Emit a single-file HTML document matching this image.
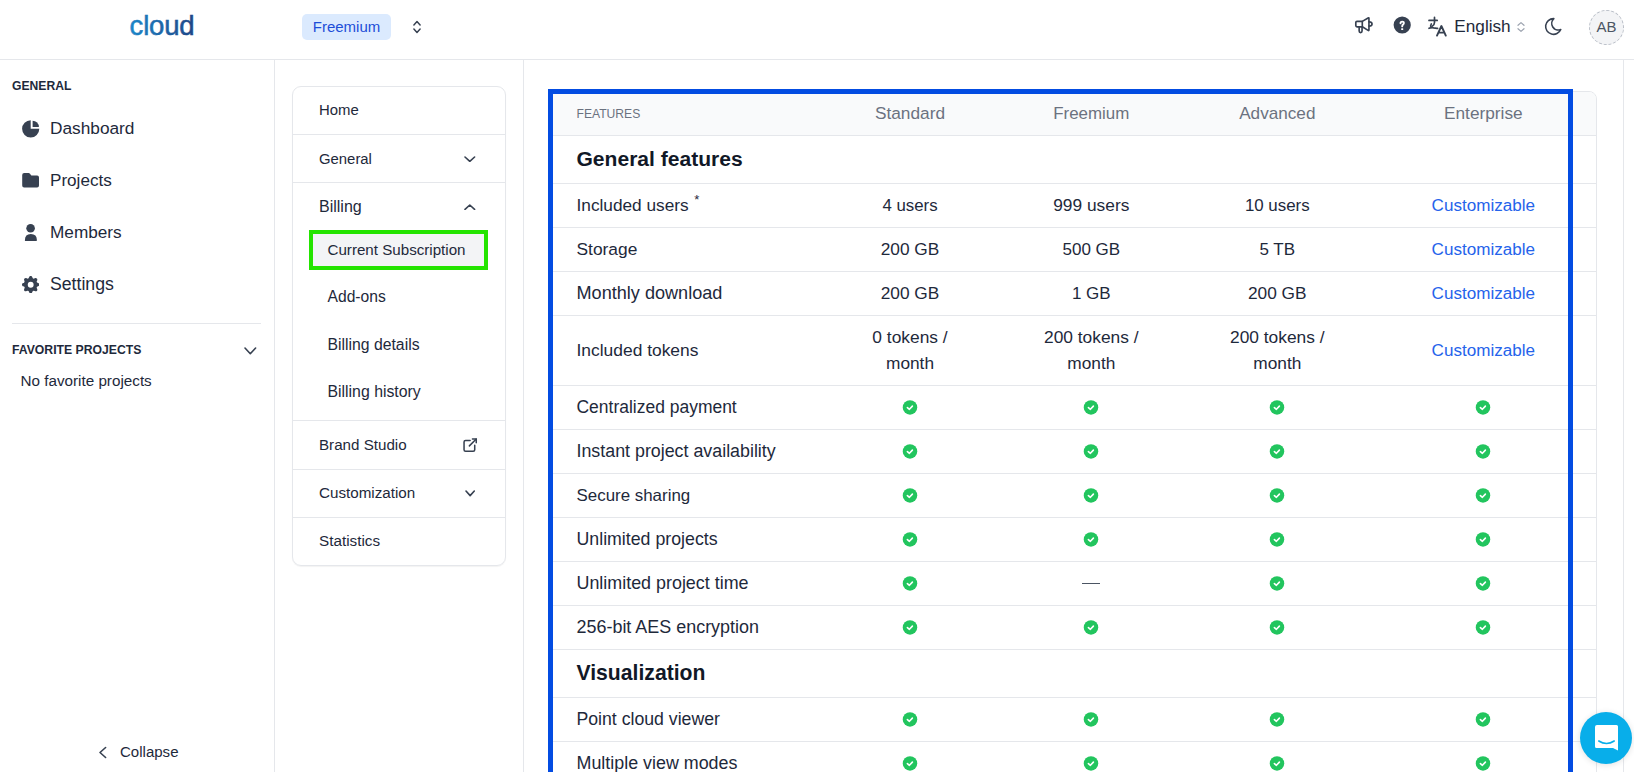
<!DOCTYPE html>
<html><head><meta charset="utf-8">
<style>
*{box-sizing:border-box;margin:0;padding:0}
html,body{width:1634px;height:772px;overflow:hidden;background:#fff;font-family:"Liberation Sans",sans-serif;color:#1e293b;position:relative}
.a{position:absolute;white-space:nowrap}
svg{display:block}
</style></head><body>
<div style="position:absolute;left:0;top:59px;width:1634px;height:1px;background:#e5e7eb"></div>
<svg style="position:absolute;left:0;top:0" width="260" height="50" viewBox="0 0 260 50"><defs><linearGradient id="lg" x1="130" y1="0" x2="193" y2="0" gradientUnits="userSpaceOnUse"><stop offset="0" stop-color="#1b86c8"/><stop offset="1" stop-color="#1f4788"/></linearGradient></defs><text x="129.6" y="35" font-family="Liberation Sans" font-size="27.5" letter-spacing="-0.2" fill="url(#lg)" stroke="url(#lg)" stroke-width="0.55">cloud</text></svg>
<div style="position:absolute;left:302px;top:14px;width:89px;height:26px;border-radius:5px;background:#dbeafe"></div>
<div class="a" style="left:46.5px;width:600px;text-align:center;top:17.80px;font-size:15px;line-height:18px;color:#1d4ed8;">Freemium</div>
<svg style="position:absolute;left:411px;top:19px" width="12" height="16" viewBox="0 0 12 16"><path d="M2.9 5.9L6 2.6L9.1 5.9M2.9 10.1L6 13.4L9.1 10.1" fill="none" stroke="#374151" stroke-width="1.5" stroke-linecap="round" stroke-linejoin="round"/></svg>
<svg style="position:absolute;left:1350px;top:12px" width="30" height="26" viewBox="0 0 30 26"><g fill="none" stroke="#374151" stroke-width="1.65" stroke-linecap="round" stroke-linejoin="round"><path d="M12.3 9.4H7Q5.8 9.4 5.8 10.6V13.6Q5.8 14.8 7 14.8H12.3Z"/><path d="M12.3 9.4L18.1 6Q18.95 5.5 18.95 6.4V18Q18.95 18.9 18.1 18.4L12.3 14.8"/><path d="M18.95 9.8A3.1 2.15 0 0 1 18.95 14.1"/><path d="M9.15 14.8V19.1A1.45 1.45 0 0 0 12.05 19.1V14.8"/></g></svg>
<svg style="position:absolute;left:1390px;top:13px" width="24" height="24" viewBox="0 0 24 24"><circle cx="12.2" cy="12" r="8.6" fill="#374151"/><path d="M10.5 10.2Q10.5 8.6 12.2 8.6Q13.9 8.6 13.9 10.1Q13.9 11.1 13 11.6Q12.2 12.1 12.2 13.4" fill="none" stroke="#fff" stroke-width="1.9" stroke-linecap="round"/><rect x="11.2" y="15.2" width="2" height="1.8" rx="0.3" fill="#fff"/></svg>
<svg style="position:absolute;left:1424px;top:12px" width="28" height="28" viewBox="0 0 28 28"><g fill="none" stroke="#374151" stroke-width="1.7" stroke-linecap="round" stroke-linejoin="round"><path d="M5 8.4H13.2"/><path d="M10.5 5.4V10.5Q10.4 13.3 8.2 14.2"/><path d="M7.3 11.9Q6.2 13.6 7.2 15.4"/><path d="M5 16.3Q7.5 15.3 9.6 15.9Q11.6 16.4 13.6 16.3"/><path d="M13 23.6L17.4 14L21.8 23.6M14.6 20.6H20.2" stroke-width="1.9"/></g></svg>
<div class="a" style="left:1454.3px;top:16.24px;font-size:17.2px;line-height:21px;color:#1e293b;">English</div>
<svg style="position:absolute;left:1515px;top:20px" width="12" height="14" viewBox="0 0 12 14"><path d="M3 5.3L6 2.6L9 5.3M3 8.7L6 11.4L9 8.7" fill="none" stroke="#9ca3af" stroke-width="1.2" stroke-linecap="round" stroke-linejoin="round"/></svg>
<svg style="position:absolute;left:1542.6px;top:16.2px" width="21" height="21" viewBox="0 0 24 24"><path d="M12 3c.132 0 .263 0 .393 0a7.5 7.5 0 0 0 7.92 12.446a9 9 0 1 1 -8.313 -12.454z" fill="none" stroke="#374151" stroke-width="1.8" stroke-linecap="round" stroke-linejoin="round"/></svg>
<div style="position:absolute;left:1589px;top:10px;width:35px;height:35px;border-radius:50%;background:#f3f4f6;border:1px dashed #b9bec7"></div>
<div class="a" style="left:1306.5px;width:600px;text-align:center;top:17.91px;font-size:14.98px;line-height:18px;color:#4b5563;">AB</div>
<div style="position:absolute;left:274px;top:60px;width:1px;height:712px;background:#e5e7eb"></div>
<div class="a" style="left:12px;top:78.79px;font-size:12.15px;line-height:15px;color:#1e293b;font-weight:bold;">GENERAL</div>
<svg style="position:absolute;left:18px;top:115px" width="26" height="26" viewBox="0 0 26 26"><path d="M12.7 5.2V13.8H21.3A8.6 8.6 0 1 1 12.7 5.2Z" fill="#374151"/><path d="M14.6 5.7V12H20.9A6.3 6.3 0 0 0 14.6 5.7Z" fill="#374151"/></svg>
<div class="a" style="left:50px;top:118.01px;font-size:17.28px;line-height:21px;color:#1e293b;">Dashboard</div>
<svg style="position:absolute;left:18px;top:168px" width="26" height="26" viewBox="0 0 26 26"><path d="M6.2 5H10.6Q11.4 5 12 5.7L13.1 7.2Q13.4 7.6 14 7.6H19.1Q21 7.6 21 9.5V17.6Q21 19.5 19.1 19.5H6.1Q4.2 19.5 4.2 17.6V7Q4.2 5 6.2 5Z" fill="#374151"/></svg>
<div class="a" style="left:50px;top:169.76px;font-size:17.12px;line-height:21px;color:#1e293b;">Projects</div>
<svg style="position:absolute;left:18px;top:219px" width="26" height="26" viewBox="0 0 26 26"><circle cx="12.6" cy="9.3" r="4.3" fill="#374151"/><path d="M7.2 21.9Q6.9 21.9 6.9 21.3Q6.9 15 12.8 15Q18.9 15 18.9 21.3Q18.9 21.9 18.4 21.9Z" fill="#374151"/></svg>
<div class="a" style="left:50px;top:222.00px;font-size:17.22px;line-height:21px;color:#1e293b;">Members</div>
<svg style="position:absolute;left:22px;top:275.5px" width="17.4" height="17.4" viewBox="2 2 16 16"><path fill-rule="evenodd" d="M11.49 3.17c-.38-1.56-2.6-1.56-2.98 0a1.532 1.532 0 01-2.286.948c-1.372-.836-2.942.734-2.106 2.106.54.886.061 2.042-.947 2.287-1.561.379-1.561 2.6 0 2.978a1.532 1.532 0 01.947 2.287c-.836 1.372.734 2.942 2.106 2.106a1.532 1.532 0 012.287.947c.379 1.561 2.6 1.561 2.978 0a1.533 1.533 0 012.287-.947c1.372.836 2.942-.734 2.106-2.106a1.533 1.533 0 01.947-2.287c1.561-.379 1.561-2.6 0-2.978a1.532 1.532 0 01-.947-2.287c.836-1.372-.734-2.942-2.106-2.106a1.532 1.532 0 01-2.287-.947zM10 12.7a2.7 2.7 0 100-5.4 2.7 2.7 0 000 5.4z" fill="#374151"/></svg>
<div class="a" style="left:50px;top:274.00px;font-size:17.68px;line-height:21px;color:#1e293b;">Settings</div>
<div style="position:absolute;left:12px;top:323px;width:249px;height:1px;background:#e5e7eb"></div>
<div class="a" style="left:12px;top:342.56px;font-size:12.23px;line-height:15px;color:#1e293b;font-weight:bold;">FAVORITE PROJECTS</div>
<svg style="position:absolute;left:243px;top:344px" width="15" height="14" viewBox="0 0 15 14"><path d="M2 4L7.3 9.7L12.6 4" fill="none" stroke="#374151" stroke-width="1.6" stroke-linecap="round" stroke-linejoin="round"/></svg>
<div class="a" style="left:20.5px;top:371.72px;font-size:15.24px;line-height:18px;color:#1e293b;">No favorite projects</div>
<svg style="position:absolute;left:96px;top:744px" width="14" height="17" viewBox="0 0 14 17"><path d="M9.6 3.5L4 8.5L9.6 13.5" fill="none" stroke="#374151" stroke-width="1.6" stroke-linecap="round" stroke-linejoin="round"/></svg>
<div class="a" style="left:120px;top:743.00px;font-size:15.04px;line-height:18px;color:#1e293b;">Collapse</div>
<div style="position:absolute;left:523px;top:60px;width:1px;height:712px;background:#e5e7eb"></div>
<div style="position:absolute;left:292px;top:86px;width:214px;height:480px;border:1px solid #e5e7eb;border-radius:9px;box-shadow:0 1px 1px rgba(0,0,0,0.05)"></div>
<div style="position:absolute;left:293px;top:134px;width:212px;height:1px;background:#e5e7eb"></div>
<div style="position:absolute;left:293px;top:182px;width:212px;height:1px;background:#e5e7eb"></div>
<div style="position:absolute;left:293px;top:420px;width:212px;height:1px;background:#e5e7eb"></div>
<div style="position:absolute;left:293px;top:469px;width:212px;height:1px;background:#e5e7eb"></div>
<div style="position:absolute;left:293px;top:517px;width:212px;height:1px;background:#e5e7eb"></div>
<div class="a" style="left:319px;top:101.33px;font-size:14.91px;line-height:18px;color:#1e293b;">Home</div>
<div class="a" style="left:319px;top:149.74px;font-size:14.89px;line-height:18px;color:#1e293b;">General</div>
<svg style="position:absolute;left:464.0px;top:155.5px" width="11.6" height="6.4" viewBox="0 0 11.6 6.4"><path d="M1 1L5.8 5.4L10.6 1" fill="none" stroke="#374151" stroke-width="1.6" stroke-linecap="round" stroke-linejoin="round"/></svg>
<div class="a" style="left:319px;top:196.95px;font-size:16.0px;line-height:19px;color:#1e293b;">Billing</div>
<svg style="position:absolute;left:464.0px;top:203.5px" width="11.6" height="6.4" viewBox="0 0 11.6 6.4"><path d="M1 5.4L5.8 1L10.6 5.4" fill="none" stroke="#374151" stroke-width="1.6" stroke-linecap="round" stroke-linejoin="round"/></svg>
<div style="position:absolute;left:309px;top:230px;width:179px;height:40px;background:#f3f4f6;border:4px solid #24e400"></div>
<div class="a" style="left:327.5px;top:241.25px;font-size:15.15px;line-height:18px;color:#1e293b;">Current Subscription</div>
<div class="a" style="left:327.5px;top:287.47px;font-size:15.65px;line-height:19px;color:#1e293b;">Add-ons</div>
<div class="a" style="left:327.5px;top:334.53px;font-size:15.77px;line-height:19px;color:#1e293b;">Billing details</div>
<div class="a" style="left:327.5px;top:382.41px;font-size:15.84px;line-height:19px;color:#1e293b;">Billing history</div>
<div class="a" style="left:319px;top:435.74px;font-size:15.16px;line-height:18px;color:#1e293b;">Brand Studio</div>
<svg style="position:absolute;left:460.6px;top:435.9px" width="18.3" height="18.3" viewBox="0 0 24 24"><g fill="none" stroke="#374151" stroke-width="2" stroke-linecap="round" stroke-linejoin="round"><path d="M12 6h-6a2 2 0 0 0 -2 2v10a2 2 0 0 0 2 2h10a2 2 0 0 0 2 -2v-6"/><path d="M11 13l9 -9"/><path d="M15 4h5v5"/></g></svg>
<div class="a" style="left:319px;top:483.73px;font-size:15.19px;line-height:18px;color:#1e293b;">Customization</div>
<svg style="position:absolute;left:464.7px;top:490.0px" width="10.3" height="6.6" viewBox="0 0 10.3 6.6"><path d="M1 1L5.15 5.6L9.3 1" fill="none" stroke="#374151" stroke-width="1.6" stroke-linecap="round" stroke-linejoin="round"/></svg>
<div class="a" style="left:319px;top:532.21px;font-size:15.25px;line-height:18px;color:#1e293b;">Statistics</div>
<div style="position:absolute;left:550px;top:91px;width:1047px;height:720px;border:1px solid #e5e7eb;border-radius:8px;overflow:hidden"><div style="position:absolute;left:0;top:0;width:100%;height:44px;background:#f9fafb"></div></div>
<div style="position:absolute;left:551px;top:135px;width:1045px;height:1px;background:#e5e7eb"></div>
<div style="position:absolute;left:551px;top:183px;width:1045px;height:1px;background:#e5e7eb"></div>
<div style="position:absolute;left:551px;top:227px;width:1045px;height:1px;background:#e5e7eb"></div>
<div style="position:absolute;left:551px;top:271px;width:1045px;height:1px;background:#e5e7eb"></div>
<div style="position:absolute;left:551px;top:315px;width:1045px;height:1px;background:#e5e7eb"></div>
<div style="position:absolute;left:551px;top:385px;width:1045px;height:1px;background:#e5e7eb"></div>
<div style="position:absolute;left:551px;top:429px;width:1045px;height:1px;background:#e5e7eb"></div>
<div style="position:absolute;left:551px;top:473px;width:1045px;height:1px;background:#e5e7eb"></div>
<div style="position:absolute;left:551px;top:517px;width:1045px;height:1px;background:#e5e7eb"></div>
<div style="position:absolute;left:551px;top:561px;width:1045px;height:1px;background:#e5e7eb"></div>
<div style="position:absolute;left:551px;top:605px;width:1045px;height:1px;background:#e5e7eb"></div>
<div style="position:absolute;left:551px;top:649px;width:1045px;height:1px;background:#e5e7eb"></div>
<div style="position:absolute;left:551px;top:697px;width:1045px;height:1px;background:#e5e7eb"></div>
<div style="position:absolute;left:551px;top:741px;width:1045px;height:1px;background:#e5e7eb"></div>
<div class="a" style="left:576.5px;top:106.89px;font-size:12.13px;line-height:15px;color:#6b7280;">FEATURES</div>
<div class="a" style="left:610px;width:600px;text-align:center;top:103.00px;font-size:17.27px;line-height:21px;color:#6b7280;">Standard</div>
<div class="a" style="left:791.3px;width:600px;text-align:center;top:104.00px;font-size:16.91px;line-height:20px;color:#6b7280;">Freemium</div>
<div class="a" style="left:977.3px;width:600px;text-align:center;top:103.00px;font-size:17.15px;line-height:21px;color:#6b7280;">Advanced</div>
<div class="a" style="left:1183.3px;width:600px;text-align:center;top:103.00px;font-size:17.26px;line-height:21px;color:#6b7280;">Enterprise</div>
<div class="a" style="left:576.5px;top:146.00px;font-size:21.06px;line-height:25px;color:#111827;font-weight:bold;">General features</div>
<div class="a" style="left:576.5px;top:195.00px;font-size:17.26px;line-height:21px;color:#1e293b;">Included users<span style="font-size:13px;position:relative;top:-7px;margin-left:5.5px">*</span></div>
<div class="a" style="left:610px;width:600px;text-align:center;top:196.00px;font-size:16.83px;line-height:20px;color:#1e293b;">4 users</div>
<div class="a" style="left:791.3px;width:600px;text-align:center;top:195.00px;font-size:17.33px;line-height:21px;color:#1e293b;">999 users</div>
<div class="a" style="left:977.3px;width:600px;text-align:center;top:196.00px;font-size:16.9px;line-height:20px;color:#1e293b;">10 users</div>
<div class="a" style="left:1183.3px;width:600px;text-align:center;top:196.00px;font-size:17.08px;line-height:20px;color:#2563eb;">Customizable</div>
<div class="a" style="left:576.5px;top:239.00px;font-size:17.38px;line-height:21px;color:#1e293b;">Storage</div>
<div class="a" style="left:610px;width:600px;text-align:center;top:239.00px;font-size:17.29px;line-height:21px;color:#1e293b;">200 GB</div>
<div class="a" style="left:791.3px;width:600px;text-align:center;top:240.00px;font-size:17px;line-height:20px;color:#1e293b;">500 GB</div>
<div class="a" style="left:977.3px;width:600px;text-align:center;top:240.00px;font-size:16.99px;line-height:20px;color:#1e293b;">5 TB</div>
<div class="a" style="left:1183.3px;width:600px;text-align:center;top:240.00px;font-size:17.08px;line-height:20px;color:#2563eb;">Customizable</div>
<div class="a" style="left:576.5px;top:282.00px;font-size:18.1px;line-height:22px;color:#1e293b;">Monthly download</div>
<div class="a" style="left:610px;width:600px;text-align:center;top:283.00px;font-size:17.29px;line-height:21px;color:#1e293b;">200 GB</div>
<div class="a" style="left:791.3px;width:600px;text-align:center;top:284.00px;font-size:17px;line-height:20px;color:#1e293b;">1 GB</div>
<div class="a" style="left:977.3px;width:600px;text-align:center;top:283.00px;font-size:17.29px;line-height:21px;color:#1e293b;">200 GB</div>
<div class="a" style="left:1183.3px;width:600px;text-align:center;top:284.00px;font-size:17.08px;line-height:20px;color:#2563eb;">Customizable</div>
<div class="a" style="left:576.5px;top:340.00px;font-size:17.42px;line-height:21px;color:#1e293b;">Included tokens</div>
<div class="a" style="left:610px;width:600px;text-align:center;top:327.48px;font-size:17.37px;line-height:21px;color:#1e293b;">0 tokens /</div>
<div class="a" style="left:610px;width:600px;text-align:center;top:353.00px;font-size:17.3px;line-height:21px;color:#1e293b;">month</div>
<div class="a" style="left:791.3px;width:600px;text-align:center;top:327.47px;font-size:17.38px;line-height:21px;color:#1e293b;">200 tokens /</div>
<div class="a" style="left:791.3px;width:600px;text-align:center;top:353.00px;font-size:17.3px;line-height:21px;color:#1e293b;">month</div>
<div class="a" style="left:977.3px;width:600px;text-align:center;top:327.47px;font-size:17.38px;line-height:21px;color:#1e293b;">200 tokens /</div>
<div class="a" style="left:977.3px;width:600px;text-align:center;top:353.00px;font-size:17.3px;line-height:21px;color:#1e293b;">month</div>
<div class="a" style="left:1183.3px;width:600px;text-align:center;top:341.00px;font-size:17.08px;line-height:20px;color:#2563eb;">Customizable</div>
<div class="a" style="left:576.5px;top:397.00px;font-size:17.48px;line-height:21px;color:#1e293b;">Centralized payment</div>
<svg style="position:absolute;left:902.1px;top:399.1px" width="16" height="16" viewBox="0 0 16 16"><circle cx="8" cy="8.4" r="7.25" fill="#22c55e"/><path d="M5.4 8.6L7.4 10.3L10.4 7.1" fill="none" stroke="#fff" stroke-width="1.6" stroke-linecap="round" stroke-linejoin="round"/></svg>
<svg style="position:absolute;left:1083.3999999999999px;top:399.1px" width="16" height="16" viewBox="0 0 16 16"><circle cx="8" cy="8.4" r="7.25" fill="#22c55e"/><path d="M5.4 8.6L7.4 10.3L10.4 7.1" fill="none" stroke="#fff" stroke-width="1.6" stroke-linecap="round" stroke-linejoin="round"/></svg>
<svg style="position:absolute;left:1269.3999999999999px;top:399.1px" width="16" height="16" viewBox="0 0 16 16"><circle cx="8" cy="8.4" r="7.25" fill="#22c55e"/><path d="M5.4 8.6L7.4 10.3L10.4 7.1" fill="none" stroke="#fff" stroke-width="1.6" stroke-linecap="round" stroke-linejoin="round"/></svg>
<svg style="position:absolute;left:1475.3999999999999px;top:399.1px" width="16" height="16" viewBox="0 0 16 16"><circle cx="8" cy="8.4" r="7.25" fill="#22c55e"/><path d="M5.4 8.6L7.4 10.3L10.4 7.1" fill="none" stroke="#fff" stroke-width="1.6" stroke-linecap="round" stroke-linejoin="round"/></svg>
<div class="a" style="left:576.5px;top:441.00px;font-size:17.84px;line-height:21px;color:#1e293b;">Instant project availability</div>
<svg style="position:absolute;left:902.1px;top:443.1px" width="16" height="16" viewBox="0 0 16 16"><circle cx="8" cy="8.4" r="7.25" fill="#22c55e"/><path d="M5.4 8.6L7.4 10.3L10.4 7.1" fill="none" stroke="#fff" stroke-width="1.6" stroke-linecap="round" stroke-linejoin="round"/></svg>
<svg style="position:absolute;left:1083.3999999999999px;top:443.1px" width="16" height="16" viewBox="0 0 16 16"><circle cx="8" cy="8.4" r="7.25" fill="#22c55e"/><path d="M5.4 8.6L7.4 10.3L10.4 7.1" fill="none" stroke="#fff" stroke-width="1.6" stroke-linecap="round" stroke-linejoin="round"/></svg>
<svg style="position:absolute;left:1269.3999999999999px;top:443.1px" width="16" height="16" viewBox="0 0 16 16"><circle cx="8" cy="8.4" r="7.25" fill="#22c55e"/><path d="M5.4 8.6L7.4 10.3L10.4 7.1" fill="none" stroke="#fff" stroke-width="1.6" stroke-linecap="round" stroke-linejoin="round"/></svg>
<svg style="position:absolute;left:1475.3999999999999px;top:443.1px" width="16" height="16" viewBox="0 0 16 16"><circle cx="8" cy="8.4" r="7.25" fill="#22c55e"/><path d="M5.4 8.6L7.4 10.3L10.4 7.1" fill="none" stroke="#fff" stroke-width="1.6" stroke-linecap="round" stroke-linejoin="round"/></svg>
<div class="a" style="left:576.5px;top:486.13px;font-size:16.92px;line-height:20px;color:#1e293b;">Secure sharing</div>
<svg style="position:absolute;left:902.1px;top:487.1px" width="16" height="16" viewBox="0 0 16 16"><circle cx="8" cy="8.4" r="7.25" fill="#22c55e"/><path d="M5.4 8.6L7.4 10.3L10.4 7.1" fill="none" stroke="#fff" stroke-width="1.6" stroke-linecap="round" stroke-linejoin="round"/></svg>
<svg style="position:absolute;left:1083.3999999999999px;top:487.1px" width="16" height="16" viewBox="0 0 16 16"><circle cx="8" cy="8.4" r="7.25" fill="#22c55e"/><path d="M5.4 8.6L7.4 10.3L10.4 7.1" fill="none" stroke="#fff" stroke-width="1.6" stroke-linecap="round" stroke-linejoin="round"/></svg>
<svg style="position:absolute;left:1269.3999999999999px;top:487.1px" width="16" height="16" viewBox="0 0 16 16"><circle cx="8" cy="8.4" r="7.25" fill="#22c55e"/><path d="M5.4 8.6L7.4 10.3L10.4 7.1" fill="none" stroke="#fff" stroke-width="1.6" stroke-linecap="round" stroke-linejoin="round"/></svg>
<svg style="position:absolute;left:1475.3999999999999px;top:487.1px" width="16" height="16" viewBox="0 0 16 16"><circle cx="8" cy="8.4" r="7.25" fill="#22c55e"/><path d="M5.4 8.6L7.4 10.3L10.4 7.1" fill="none" stroke="#fff" stroke-width="1.6" stroke-linecap="round" stroke-linejoin="round"/></svg>
<div class="a" style="left:576.5px;top:529.00px;font-size:17.75px;line-height:21px;color:#1e293b;">Unlimited projects</div>
<svg style="position:absolute;left:902.1px;top:531.1px" width="16" height="16" viewBox="0 0 16 16"><circle cx="8" cy="8.4" r="7.25" fill="#22c55e"/><path d="M5.4 8.6L7.4 10.3L10.4 7.1" fill="none" stroke="#fff" stroke-width="1.6" stroke-linecap="round" stroke-linejoin="round"/></svg>
<svg style="position:absolute;left:1083.3999999999999px;top:531.1px" width="16" height="16" viewBox="0 0 16 16"><circle cx="8" cy="8.4" r="7.25" fill="#22c55e"/><path d="M5.4 8.6L7.4 10.3L10.4 7.1" fill="none" stroke="#fff" stroke-width="1.6" stroke-linecap="round" stroke-linejoin="round"/></svg>
<svg style="position:absolute;left:1269.3999999999999px;top:531.1px" width="16" height="16" viewBox="0 0 16 16"><circle cx="8" cy="8.4" r="7.25" fill="#22c55e"/><path d="M5.4 8.6L7.4 10.3L10.4 7.1" fill="none" stroke="#fff" stroke-width="1.6" stroke-linecap="round" stroke-linejoin="round"/></svg>
<svg style="position:absolute;left:1475.3999999999999px;top:531.1px" width="16" height="16" viewBox="0 0 16 16"><circle cx="8" cy="8.4" r="7.25" fill="#22c55e"/><path d="M5.4 8.6L7.4 10.3L10.4 7.1" fill="none" stroke="#fff" stroke-width="1.6" stroke-linecap="round" stroke-linejoin="round"/></svg>
<div class="a" style="left:576.5px;top:573.00px;font-size:17.9px;line-height:21px;color:#1e293b;">Unlimited project time</div>
<svg style="position:absolute;left:902.1px;top:575.1px" width="16" height="16" viewBox="0 0 16 16"><circle cx="8" cy="8.4" r="7.25" fill="#22c55e"/><path d="M5.4 8.6L7.4 10.3L10.4 7.1" fill="none" stroke="#fff" stroke-width="1.6" stroke-linecap="round" stroke-linejoin="round"/></svg>
<div style="position:absolute;left:1082.4px;top:583px;width:18px;height:1.4px;background:#4b5563"></div>
<svg style="position:absolute;left:1269.3999999999999px;top:575.1px" width="16" height="16" viewBox="0 0 16 16"><circle cx="8" cy="8.4" r="7.25" fill="#22c55e"/><path d="M5.4 8.6L7.4 10.3L10.4 7.1" fill="none" stroke="#fff" stroke-width="1.6" stroke-linecap="round" stroke-linejoin="round"/></svg>
<svg style="position:absolute;left:1475.3999999999999px;top:575.1px" width="16" height="16" viewBox="0 0 16 16"><circle cx="8" cy="8.4" r="7.25" fill="#22c55e"/><path d="M5.4 8.6L7.4 10.3L10.4 7.1" fill="none" stroke="#fff" stroke-width="1.6" stroke-linecap="round" stroke-linejoin="round"/></svg>
<div class="a" style="left:576.5px;top:616.00px;font-size:17.94px;line-height:22px;color:#1e293b;">256-bit AES encryption</div>
<svg style="position:absolute;left:902.1px;top:619.1px" width="16" height="16" viewBox="0 0 16 16"><circle cx="8" cy="8.4" r="7.25" fill="#22c55e"/><path d="M5.4 8.6L7.4 10.3L10.4 7.1" fill="none" stroke="#fff" stroke-width="1.6" stroke-linecap="round" stroke-linejoin="round"/></svg>
<svg style="position:absolute;left:1083.3999999999999px;top:619.1px" width="16" height="16" viewBox="0 0 16 16"><circle cx="8" cy="8.4" r="7.25" fill="#22c55e"/><path d="M5.4 8.6L7.4 10.3L10.4 7.1" fill="none" stroke="#fff" stroke-width="1.6" stroke-linecap="round" stroke-linejoin="round"/></svg>
<svg style="position:absolute;left:1269.3999999999999px;top:619.1px" width="16" height="16" viewBox="0 0 16 16"><circle cx="8" cy="8.4" r="7.25" fill="#22c55e"/><path d="M5.4 8.6L7.4 10.3L10.4 7.1" fill="none" stroke="#fff" stroke-width="1.6" stroke-linecap="round" stroke-linejoin="round"/></svg>
<svg style="position:absolute;left:1475.3999999999999px;top:619.1px" width="16" height="16" viewBox="0 0 16 16"><circle cx="8" cy="8.4" r="7.25" fill="#22c55e"/><path d="M5.4 8.6L7.4 10.3L10.4 7.1" fill="none" stroke="#fff" stroke-width="1.6" stroke-linecap="round" stroke-linejoin="round"/></svg>
<div class="a" style="left:576.5px;top:660.00px;font-size:21.16px;line-height:25px;color:#111827;font-weight:bold;">Visualization</div>
<div class="a" style="left:576.5px;top:709.00px;font-size:17.68px;line-height:21px;color:#1e293b;">Point cloud viewer</div>
<svg style="position:absolute;left:902.1px;top:711.1px" width="16" height="16" viewBox="0 0 16 16"><circle cx="8" cy="8.4" r="7.25" fill="#22c55e"/><path d="M5.4 8.6L7.4 10.3L10.4 7.1" fill="none" stroke="#fff" stroke-width="1.6" stroke-linecap="round" stroke-linejoin="round"/></svg>
<svg style="position:absolute;left:1083.3999999999999px;top:711.1px" width="16" height="16" viewBox="0 0 16 16"><circle cx="8" cy="8.4" r="7.25" fill="#22c55e"/><path d="M5.4 8.6L7.4 10.3L10.4 7.1" fill="none" stroke="#fff" stroke-width="1.6" stroke-linecap="round" stroke-linejoin="round"/></svg>
<svg style="position:absolute;left:1269.3999999999999px;top:711.1px" width="16" height="16" viewBox="0 0 16 16"><circle cx="8" cy="8.4" r="7.25" fill="#22c55e"/><path d="M5.4 8.6L7.4 10.3L10.4 7.1" fill="none" stroke="#fff" stroke-width="1.6" stroke-linecap="round" stroke-linejoin="round"/></svg>
<svg style="position:absolute;left:1475.3999999999999px;top:711.1px" width="16" height="16" viewBox="0 0 16 16"><circle cx="8" cy="8.4" r="7.25" fill="#22c55e"/><path d="M5.4 8.6L7.4 10.3L10.4 7.1" fill="none" stroke="#fff" stroke-width="1.6" stroke-linecap="round" stroke-linejoin="round"/></svg>
<div class="a" style="left:576.5px;top:753.00px;font-size:17.89px;line-height:21px;color:#1e293b;">Multiple view modes</div>
<svg style="position:absolute;left:902.1px;top:755.1px" width="16" height="16" viewBox="0 0 16 16"><circle cx="8" cy="8.4" r="7.25" fill="#22c55e"/><path d="M5.4 8.6L7.4 10.3L10.4 7.1" fill="none" stroke="#fff" stroke-width="1.6" stroke-linecap="round" stroke-linejoin="round"/></svg>
<svg style="position:absolute;left:1083.3999999999999px;top:755.1px" width="16" height="16" viewBox="0 0 16 16"><circle cx="8" cy="8.4" r="7.25" fill="#22c55e"/><path d="M5.4 8.6L7.4 10.3L10.4 7.1" fill="none" stroke="#fff" stroke-width="1.6" stroke-linecap="round" stroke-linejoin="round"/></svg>
<svg style="position:absolute;left:1269.3999999999999px;top:755.1px" width="16" height="16" viewBox="0 0 16 16"><circle cx="8" cy="8.4" r="7.25" fill="#22c55e"/><path d="M5.4 8.6L7.4 10.3L10.4 7.1" fill="none" stroke="#fff" stroke-width="1.6" stroke-linecap="round" stroke-linejoin="round"/></svg>
<svg style="position:absolute;left:1475.3999999999999px;top:755.1px" width="16" height="16" viewBox="0 0 16 16"><circle cx="8" cy="8.4" r="7.25" fill="#22c55e"/><path d="M5.4 8.6L7.4 10.3L10.4 7.1" fill="none" stroke="#fff" stroke-width="1.6" stroke-linecap="round" stroke-linejoin="round"/></svg>
<div style="position:absolute;left:548px;top:89px;width:1025px;height:760px;border:5px solid #034ce2"></div>
<div style="position:absolute;left:1623px;top:60px;width:1px;height:712px;background:#e5e7eb"></div>
<div style="position:absolute;left:1580px;top:711.5px;width:52px;height:52px;border-radius:50%;background:#08aeea;box-shadow:0 1px 6px rgba(0,0,0,0.12)"></div>
<svg style="position:absolute;left:1590px;top:720px" width="32" height="36" viewBox="0 0 32 36"><path d="M7 5H26.5Q28 5 28 6.5V30.5L23 28H6.5Q5 28 5 26.5V7Q5 5 7 5Z" fill="#fff"/><path d="M8.8 21Q16.5 26 24.2 21" fill="none" stroke="#08aeea" stroke-width="1.6" stroke-linecap="round"/></svg>
</body></html>
